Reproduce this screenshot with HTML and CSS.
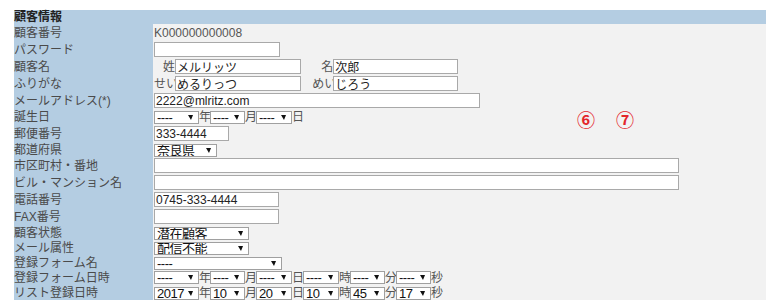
FILE: index.html
```html
<!DOCTYPE html>
<html>
<head>
<meta charset="utf-8" />
<title>顧客情報</title>
<link rel="stylesheet" href="styles.css">
</head>
<body>
<div class="wrap">
    <table class="info">
        <tr class="head"><th colspan="2">顧客情報</th></tr>
        <tr class="r-in"><td class="lbl">顧客番号</td><td class="val">K000000000008</td></tr>
        <tr class="r-in"><td class="lbl">パスワード</td><td class="val"><input type="password" class="txt w126" /></td></tr>
        <tr class="r-in">
            <td class="lbl">顧客名</td>
            <td class="val">
                <span class="nm">姓</span><input type="text" class="txt w126" value="メルリッツ" />
                <span class="nm nm2">名</span><input type="text" class="txt w125" value="次郎" />
            </td>
        </tr>
        <tr class="r-in">
            <td class="lbl">ふりがな</td>
            <td class="val">
                <span class="nm">せい</span><input type="text" class="txt w126" value="めるりっつ" />
                <span class="nm nm2">めい</span><input type="text" class="txt w125" value="じろう" />
            </td>
        </tr>
        <tr class="r-in"><td class="lbl">メールアドレス(*)</td><td class="val"><input type="text" class="txt w326" value="2222@mlritz.com" /></td></tr>
        <tr class="r-sel r-birth">
            <td class="lbl">誕生日</td>
            <td class="val">
                <span class="sel w45"><select><option>----</option></select></span><span class="unit">年</span><span class="sel w35"><select><option>----</option></select></span><span class="unit">月</span><span class="sel w36"><select><option>----</option></select></span><span class="unit">日</span>
            </td>
        </tr>
        <tr class="r-in"><td class="lbl">郵便番号</td><td class="val"><input type="text" class="txt w75" value="333-4444" /></td></tr>
        <tr class="r-sel">
            <td class="lbl">都道府県</td>
            <td class="val"><span class="sel w63"><select><option>奈良県</option></select></span></td>
        </tr>
        <tr class="r-in"><td class="lbl">市区町村・番地</td><td class="val"><input type="text" class="txt w525" /></td></tr>
        <tr class="r-in"><td class="lbl">ビル・マンション名</td><td class="val"><input type="text" class="txt w525" /></td></tr>
        <tr class="r-in"><td class="lbl">電話番号</td><td class="val"><input type="text" class="txt w125" value="0745-333-4444" /></td></tr>
        <tr class="r-in"><td class="lbl">FAX番号</td><td class="val"><input type="text" class="txt w125" /></td></tr>
        <tr class="r-sel">
            <td class="lbl">顧客状態</td>
            <td class="val"><span class="sel w95"><select><option>潜在顧客</option></select></span></td>
        </tr>
        <tr class="r-sel">
            <td class="lbl">メール属性</td>
            <td class="val"><span class="sel w95"><select><option>配信不能</option></select></span></td>
        </tr>
        <tr class="r-sel">
            <td class="lbl">登録フォーム名</td>
            <td class="val"><span class="sel w128"><select><option>----</option></select></span></td>
        </tr>
        <tr class="r-sel">
            <td class="lbl">登録フォーム日時</td>
            <td class="val">
                <span class="sel w45"><select><option>----</option></select></span><span class="unit">年</span><span class="sel w35"><select><option>----</option></select></span><span class="unit">月</span><span class="sel w36"><select><option>----</option></select></span><span class="unit">日</span><span class="sel w36"><select><option>----</option></select></span><span class="unit">時</span><span class="sel w35"><select><option>----</option></select></span><span class="unit">分</span><span class="sel w35"><select><option>----</option></select></span><span class="unit">秒</span>
            </td>
        </tr>
        <tr class="r-sel r-last">
            <td class="lbl">リスト登録日時</td>
            <td class="val">
                <span class="sel w45"><select><option>2017</option></select></span><span class="unit">年</span><span class="sel w35"><select><option>10</option></select></span><span class="unit">月</span><span class="sel w36"><select><option>20</option></select></span><span class="unit">日</span><span class="sel w36"><select><option>10</option></select></span><span class="unit">時</span><span class="sel w35"><select><option>45</option></select></span><span class="unit">分</span><span class="sel w35"><select><option>17</option></select></span><span class="unit">秒</span>
            </td>
        </tr>
    </table>
    <span class="mark mark6">⑥</span>
    <span class="mark mark7">⑦</span>
</div>
</body>
</html>
```

FILE: styles.css
```css
* {
    margin:0;
    padding:0;
    box-sizing:border-box;
}
body,html {
    width:100%;
    background:#fff;
}
body {
    padding:10px 14px 0 14px;
    font-family:"Liberation Sans","Noto Sans CJK JP",sans-serif;
    font-size:12px;
    color:#333;
}
.wrap {
    position:relative;
    width:752px;
}
.info {
    width:752px;
    border-collapse:collapse;
    border-spacing:0;
}
.info th,.info td {
    padding:0;
    line-height:14px;
    vertical-align:middle;
    white-space:nowrap;
}
.head th {
    height:14px;
    background:#b4cde2;
    text-align:left;
    font-weight:bold;
    color:#222;
}
.r-in td { height:17px; }
.r-sel td { height:15px; }
.r-birth td { height:16px; }
.r-last td { height:16px; }
.lbl {
    width:139px;
    background:#b4cde2;
    color:#4a4a4a;
}
.val {
    background:#f2f2f2;
    padding-left:1px !important;
    color:#555;
    font-size:12px;
}

/* text boxes */
.txt {
    display:inline-block;
    vertical-align:middle;
    height:15px;
    border:1px solid #a9a9a9;
    background:#fff;
    font-family:"Liberation Sans","Noto Sans CJK JP",sans-serif;
    font-size:12px;
    line-height:13px;
    color:#222;
    padding:0 1px;
    outline:none;
}
.w75 { width:75px; }
.w125 { width:125px; }
.w126 { width:126px; }
.w326 { width:326px; }
.w525 { width:525px; }

.nm {
    display:inline-block;
    width:21px;
    text-align:right;
    vertical-align:middle;
    color:#555;
}
.nm2 { margin-left:8px; }

/* select boxes */
.sel {
    position:relative;
    display:inline-block;
    vertical-align:middle;
    height:13px;
    border:1px solid #a0a0a0;
    background:#fff;
    overflow:hidden;
}
.sel select {
    -webkit-appearance:none;
    appearance:none;
    display:block;
    width:100%;
    height:11px;
    border:0;
    background:transparent;
    font-family:"Liberation Sans","Noto Sans CJK JP",sans-serif;
    font-size:13px;
    letter-spacing:-0.5px;
    line-height:11px;
    color:#111;
    padding:0 0 0 2px;
    outline:none;
}
.sel:after {
    content:"";
    position:absolute;
    right:5px;
    top:3px;
    width:0;
    height:0;
    border-left:3px solid transparent;
    border-right:2px solid transparent;
    border-top:5px solid #111;
}
.w35 { width:35px; }
.w36 { width:36px; }
.w45 { width:45px; }
.w63 { width:63px; }
.w95 { width:95px; }
.w128 { width:128px; }
.unit {
    display:inline-block;
    vertical-align:middle;
    width:11px;
    text-align:center;
    color:#555;
}

.mark {
    position:absolute;
    top:100px;
    font-size:18px;
    line-height:18px;
    font-weight:bold;
    color:#e3262b;
    font-family:"Noto Sans CJK JP",sans-serif;
}
.mark6 { left:563px; }
.mark7 { left:602px; }
```
